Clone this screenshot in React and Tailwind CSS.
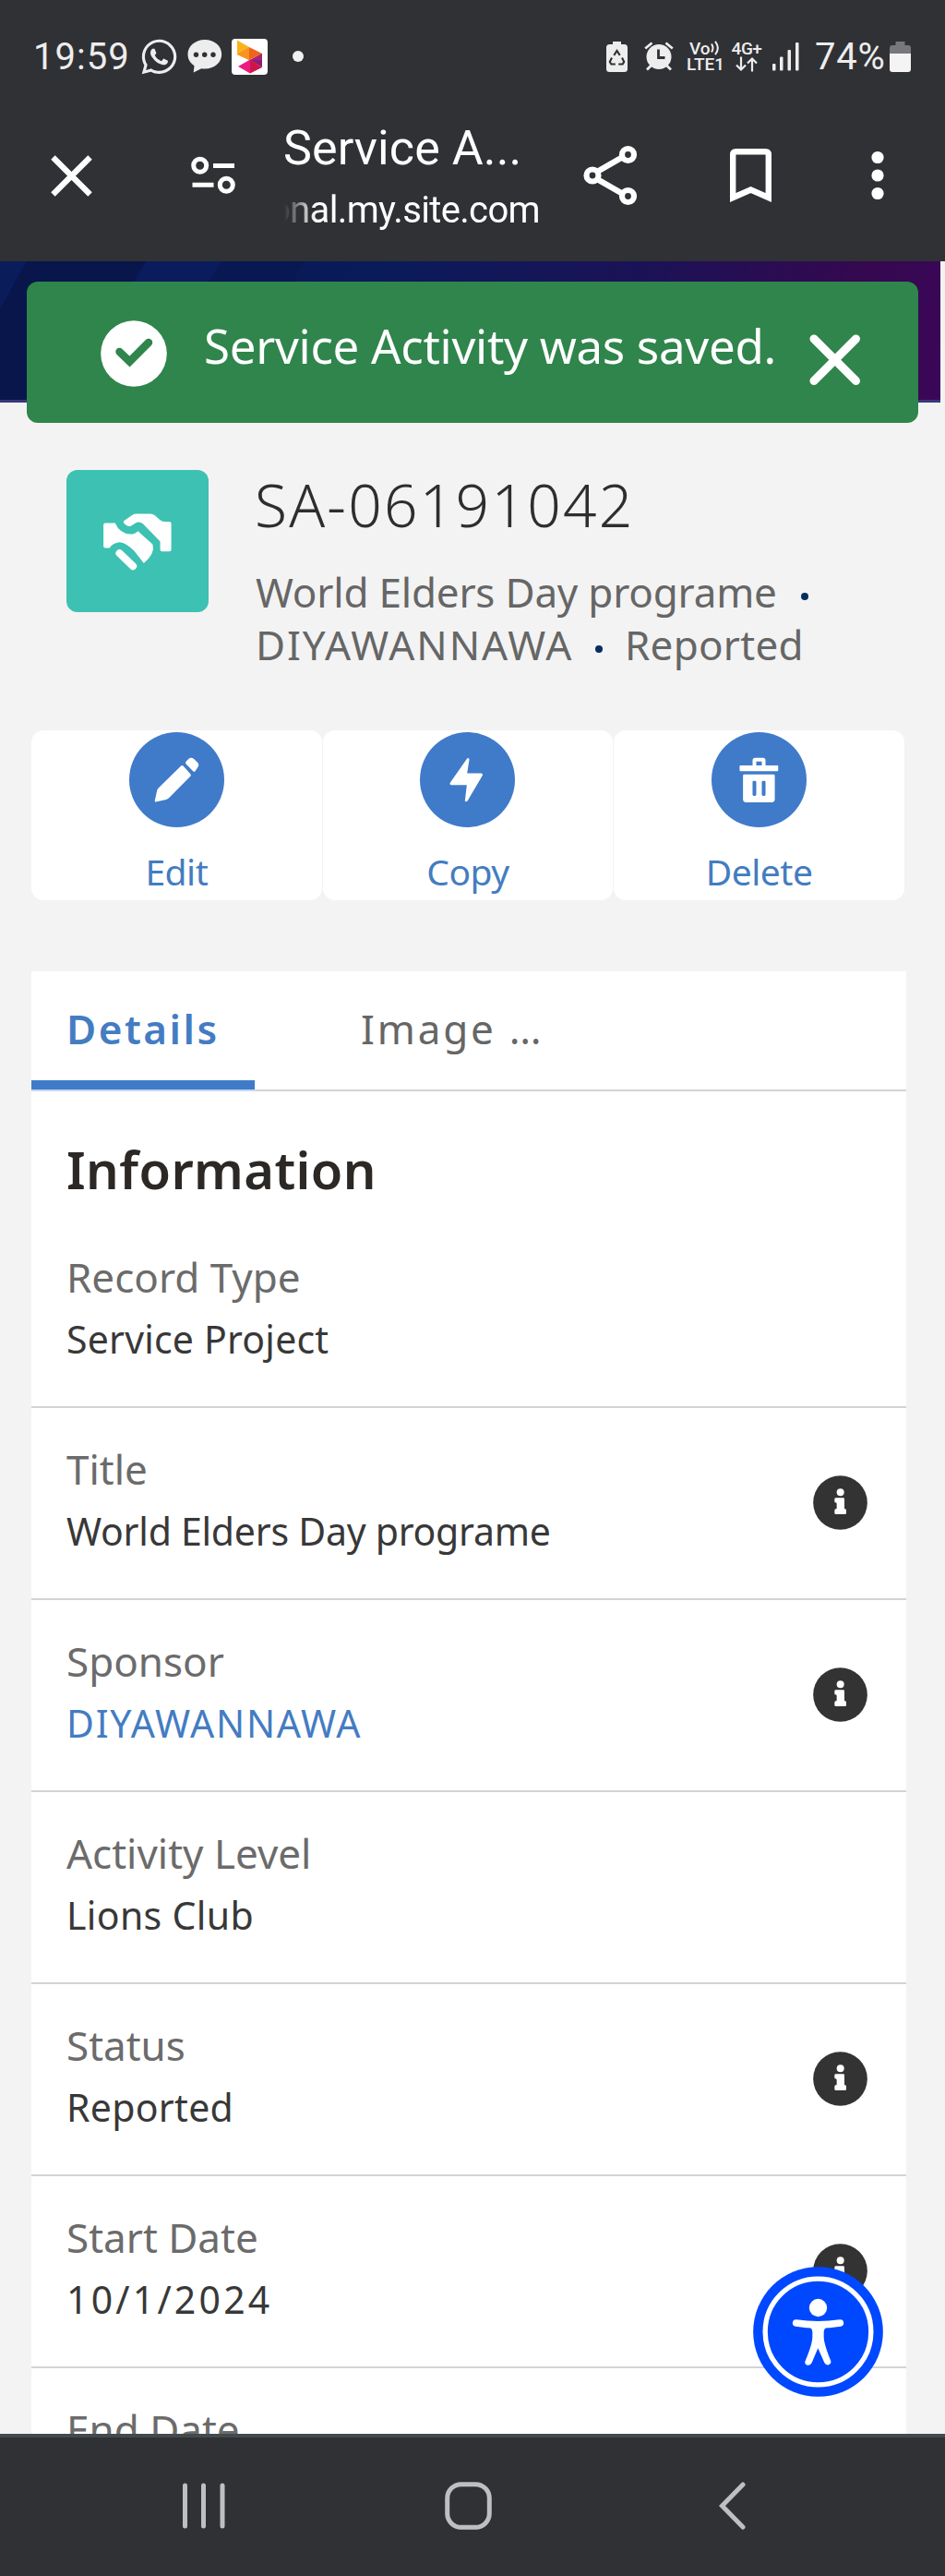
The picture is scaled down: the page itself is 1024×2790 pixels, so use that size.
import React, { useState } from "react";
import { FaWhatsapp } from "react-icons/fa";

const fields = [
  { label: "Record Type", value: "Service Project", valueClass: "tracking-[0.2px]" },
  { label: "Title", value: "World Elders Day programe", valueClass: "tracking-[-0.25px]", info: true },
  { label: "Sponsor", value: "DIYAWANNAWA", valueClass: "tracking-[1.7px]", link: true, info: true },
  { label: "Activity Level", value: "Lions Club", valueClass: "tracking-[0.35px]" },
  { label: "Status", value: "Reported", valueClass: "tracking-[0.3px]", info: true },
  { label: "Start Date", value: "10/1/2024", valueClass: "tracking-[3.2px]", info: true },
  { label: "End Date" },
];

const CrossIcon = ({ className, strokeWidth }) => (
  <svg viewBox="0 0 46 46" className={className} fill="none" stroke="currentColor" strokeWidth={strokeWidth}>
    <path d="M2.5 2.5 43.5 43.5M43.5 2.5 2.5 43.5" />
  </svg>
);

const StatusBar = () => (
  <div className="flex h-[122px] items-center pl-[36px] text-[#ededed] font-[Roboto,sans-serif]">
    <span className="w-[116px] pt-[2px] text-[40px] leading-none tracking-[1px]">19:59</span>
    <FaWhatsapp className="-ml-px h-[43px] w-[43px]" />
    <svg viewBox="0 0 38 38" className="ml-[9px] h-[38px] w-[38px]">
      <path d="M19 1C8.800 1 .5 7.800.5 16.800c0 5.600 2.800 9.600 7 12.400l-.8 7.300 8.600-4.200c1.200.2 2.500.3 3.700.3 10.200 0 18.200-6.800 18.200-15.800S29.200 1 19 1z" fill="currentColor" />
      <circle cx="9.500" cy="17.200" r="2.700" fill="#303135" />
      <circle cx="18.700" cy="17.200" r="2.700" fill="#303135" />
      <circle cx="28" cy="17.200" r="2.700" fill="#303135" />
    </svg>
    <svg viewBox="0 0 39 39" className="ml-[10px] h-[39px] w-[39px]">
      <rect width="39" height="39" rx="4" fill="#fff" />
      <path d="M6 1.500 19 9 6 17z" fill="#fbb21c" />
      <path d="M19 9 6 17l13 6z" fill="#f58a1f" />
      <path d="M19 9 33 16 19 23z" fill="#f0641e" />
      <path d="M6 17 19 9v14z" fill="#f7941d" />
      <path d="M33 16v15l-13-8z" fill="#8a1d7c" />
      <path d="M20 23 33 16v7.500z" fill="#a5246f" />
      <path d="M20 22.500 7 30l13 7.500z" fill="#ea1d84" />
      <path d="M20 22.500v15L33 31z" fill="#cf1548" />
    </svg>
    <span className="ml-[27px] h-[12px] w-[12px] rounded-full bg-[#f0f0f0]" />

    {/* battery saver */}
    <svg viewBox="0 0 23 33" className="ml-[328px] h-[33px] w-[23px]">
      <path d="M7 0h9v3h3.500A3.500 3.500 0 0 1 23 6.500v23a3.500 3.500 0 0 1-3.500 3.500h-16A3.500 3.500 0 0 1 0 29.500v-23A3.500 3.500 0 0 1 3.500 3H7z" fill="currentColor" />
      <g fill="none" stroke="#303135" strokeWidth="2.100">
        <path d="M8.300 14.800 11.500 10l3.200 4.800" />
        <path d="M6 17.500 3.800 22l1.500 2.500h4.500" />
        <path d="M17 17.500l2.200 4.500-1.500 2.500h-4.500" />
      </g>
    </svg>
    {/* alarm */}
    <svg viewBox="0 0 32 32" className="ml-[18px] h-[32px] w-[32px]">
      <circle cx="16" cy="16.500" r="13.500" fill="currentColor" />
      <g fill="none" stroke="currentColor" strokeWidth="2.800">
        <path d="M1.200 7.500 8.500 1.500M30.800 7.500 23.500 1.500M3 30.500l5-5M29 30.500l-5-5" />
      </g>
      <path d="M15.500 8.500v9h7" fill="none" stroke="#303135" strokeWidth="2.800" />
    </svg>
    <div className="ml-[14px] flex w-[42px] flex-col text-[19px] font-medium leading-[17.500px]">
      <span className="flex items-center pl-[3px]">
        Vo
        <svg viewBox="0 0 10 16" className="h-[16px] w-[10px]" fill="none" stroke="currentColor" strokeWidth="2">
          <path d="M1 3.500c2 3 2 6 0 9M5 .8c3.500 4.500 3.500 10 0 14.400" />
        </svg>
      </span>
      <span className="text-[19px]">LTE1</span>
    </div>
    <div className="ml-[5px] flex w-[36px] flex-col items-center text-[19px] font-medium leading-[17.500px]">
      <span className="tracking-[-0.5px]">4G+</span>
      <svg viewBox="0 0 24 16" className="h-[17px] w-[24px]" fill="none" stroke="currentColor" strokeWidth="2.200">
        <path d="M6 0v14M1 9l5 5 5-5M18 16V2M13 7l5-5 5 5" />
      </svg>
    </div>
    <svg viewBox="0 0 29 31" className="ml-[10px] h-[31px] w-[29px]" fill="currentColor">
      <rect x="0" y="23" width="3.500" height="7.500" rx="1" />
      <rect x="8" y="15.500" width="3.500" height="15" rx="1" />
      <rect x="16.500" y="8" width="3.500" height="22.500" rx="1" />
      <rect x="25" y="0" width="3.500" height="30.500" rx="1" />
    </svg>
    <span className="ml-[17px] w-[81px] pt-[2px] text-[40px] leading-none tracking-[0.8px]">74%</span>
    <svg viewBox="0 0 23 33" className="h-[33px] w-[23px]">
      <path d="M6.500 0h10v4H20a3 3 0 0 1 3 3v7H0V7a3 3 0 0 1 3-3h3.500z" fill="#77787b" />
      <path d="M0 13h23v17a3 3 0 0 1-3 3H3a3 3 0 0 1-3-3z" fill="#f4f4f4" />
    </svg>
  </div>
);

const BrowserBar = () => (
  <div className="flex h-[161px] pb-[25px] text-white">
    <div className="flex h-[136px] items-center pl-[55px]">
      <CrossIcon className="h-[45px] w-[45px]" strokeWidth={6.4} />
      <svg viewBox="0 0 48 42" className="ml-[107px] h-[42px] w-[48px]" fill="none" stroke="currentColor" strokeWidth="5">
        <circle cx="9.700" cy="10.200" r="7" />
        <path d="M24 10.500h23M1.500 31.200h23" />
        <circle cx="38.300" cy="31.200" r="7" />
      </svg>
      <div className="ml-[53px] mt-1 w-[277px] font-[Roboto,sans-serif]">
        <div className="-ml-px h-[64px] whitespace-nowrap text-[52px] leading-[64px] tracking-[0.1px]">Service A...</div>
        <div className="mt-[7px] flex h-[56px] justify-end overflow-hidden whitespace-nowrap text-[40px] leading-[56px] tracking-[-0.65px] [mask-image:linear-gradient(to_right,transparent,black_34px)]">
          <span>onal.my.site.com</span>
        </div>
      </div>
      <svg viewBox="0 0 60 66" className="ml-[46px] h-[66px] w-[60px]" fill="none" stroke="currentColor" strokeWidth="6.200">
        <path d="M16 29 43 13.500M16 37l27 15.500" />
        <circle cx="11" cy="33" r="6.500" />
        <circle cx="49.500" cy="10.500" r="6.500" />
        <circle cx="49.500" cy="55.500" r="6.500" />
      </svg>
      <svg viewBox="0 0 45 58" className="ml-[100px] h-[58px] w-[45px]" fill="none" stroke="currentColor" strokeWidth="6.400">
        <path d="M3.200 53V6.500Q3.200 3.200 6.500 3.200H38.500Q41.800 3.200 41.800 6.500V53L22.500 44.500z" />
      </svg>
      <svg viewBox="0 0 14 54" className="ml-[108px] h-[54px] w-[14px]" fill="currentColor">
        <circle cx="7" cy="7.500" r="6.600" />
        <circle cx="7" cy="27" r="6.600" />
        <circle cx="7" cy="46.500" r="6.600" />
      </svg>
    </div>
  </div>
);

const Toast = ({ onClose }) => (
  <div className="absolute left-[29px] top-[21.500px] flex h-[153.500px] w-[966px] items-start rounded-[12px] bg-[#2f854b] pl-[80px] text-white">
    <svg viewBox="0 0 72 72" className="mt-[42px] h-[72px] w-[72px]">
      <circle cx="36" cy="36" r="35.800" fill="#fff" />
      <path d="M20.500 34 31.500 44.500 52 24" fill="none" stroke="#2f854b" strokeWidth="8.500" strokeLinejoin="miter" strokeLinecap="round" />
    </svg>
    <span className="ml-[40px] mt-[34px] w-[624px] whitespace-nowrap text-[51px] leading-[70px] tracking-[-0.3px]">
      Service Activity was saved.
    </span>
    <button onClick={onClose} className="ml-[32px] mt-[57px]">
      <svg viewBox="0 0 56 56" className="h-[56px] w-[56px]" fill="none" stroke="#fff" strokeWidth="9" strokeLinecap="round">
        <path d="M5 5 50.500 50.500M50.500 5 5 50.500" />
      </svg>
    </button>
  </div>
);

const Banner = () => (
  <div className="h-[153px] w-[1019px] border-b-[3px] border-[#39377c] bg-[linear-gradient(100deg,#091850_0%,#0a1b5a_40%,#1c1256_68%,#35084f_90%,#3b0759_100%)]">
    <svg viewBox="0 0 500 150" className="h-[150px] w-[500px]">
      <path d="M0 0H29L0 52z" fill="#0a1c5a" />
      <path d="M29 0H158L72 150H0V52z" fill="#08164c" />
      <path d="M158 0H240L150 150H72z" fill="#0a1c5e" />
      <path d="M240 0H330L240 150H150z" fill="#091853" />
    </svg>
  </div>
);

const RecordHeader = () => (
  <div className="flex h-[355px] pl-[72px]">
    <svg viewBox="216 688 461 461" className="mt-[73px] h-[154px] w-[154px] rounded-[12px] bg-[#3dc1b3]" fill="#fff">
      <path d="M336 866q0-6 6-6h32q14 34 50 36 14 0 24-10l48 44q8 30-29 60L436 951Q410 924 388 922q-22 2-32 19h-14q-6 0-6-6z" />
      <path d="M404 852 430 834q6-4 12-4h46q8 0 14 5l16 14q8 7 16 7h16q6 0 6 6v84q0 6-6 6h-24q-6 0-6-6v-26L464 862q-12-9-24-2l-14 9q-8 4-16-2l-6-5q-6-6 0-10z" />
      <path d="M388 958 432 1000" stroke="#fff" strokeWidth="24" strokeLinecap="round" />
    </svg>
    <div className="ml-[50px] mt-[71px]">
      <h1 className="h-[80px] whitespace-nowrap text-[64px] font-[270] leading-[80px] tracking-[2.25px] text-[#2e2e2e]">SA-06191042</h1>
      <div className="mt-[26px] text-[44px] leading-[56px] text-[#666]">
        <div className="flex h-[56px] items-center">
          <span className="w-[592px] whitespace-nowrap pl-px tracking-[-0.2px]">World Elders Day programe</span>
          <span className="mt-[10px] h-[8px] w-[8px] rounded-full bg-[#032d60]" />
        </div>
        <div className="flex h-[57px] items-center">
          <span className="w-[369px] whitespace-nowrap pl-px tracking-[1.9px]">DIYAWANNAWA</span>
          <span className="mt-[11px] h-[8px] w-[8px] rounded-full bg-[#032d60]" />
          <span className="ml-[24px] tracking-[0.25px]">Reported</span>
        </div>
      </div>
    </div>
  </div>
);

const ActionButton = ({ label, children }) => (
  <button className="flex h-[184px] flex-col items-center rounded-[13px] bg-white pt-[2px]">
    <svg viewBox="0 0 308 308" className="h-[103px] w-[103px] rounded-full bg-[#407bca]" fill="#fff">
      {children}
    </svg>
    <span className="mt-[23px] text-[39px] leading-[50px] tracking-[-0.5px] text-[#447cc0]">{label}</span>
  </button>
);

const Actions = () => (
  <div className="ml-[34px] grid w-[946px] grid-cols-3 gap-[1px]">
    <ActionButton label="Edit">
      <path d="M168 109q4-3 7 0l24 27q2 3 0 6l-68 69q-5 5-11 7l-34 8q-4 0-3-4l7-32q1-4 4-8z" />
      <path d="M184 95l9-9q8-6 16 0l13 13q6 8 0 15l-8 12q-4 3-7 0L184 103q-3-4 0-8z" />
    </ActionButton>
    <ActionButton label="Copy">
      <path d="M153 85q6-3 7 4l-7 44h46q6 2 4 7L154 223q-6 5-8-1l6-51H101q-6-2-3-7z" />
    </ActionButton>
    <ActionButton label="Delete">
      <path d="M133 110V92q0-9 9-9h24q9 0 9 9v18h-12V95h-18v15z" />
      <rect x="91" y="108" width="125" height="18" rx="3" />
      <path fillRule="evenodd" d="M106 137h95q4 0 4 4v76q0 10-10 10h-83q-10 0-10-10v-76q0-4 4-4zM137 158q-4 0-4 4v40q0 4 4 4h4q4 0 4-4v-40q0-4-4-4zM167 158q-4 0-4 4v40q0 4 4 4h4q4 0 4-4v-40q0-4-4-4z" />
    </ActionButton>
  </div>
);

const Tabs = ({ active, onChange }) => (
  <div className="flex h-[130px] border-b-2 border-[#d4d4d4] text-[44px] leading-[60px]">
    <button
      onClick={() => onChange("details")}
      className={`-mb-[2px] flex w-[242px] border-b-2 pl-[38px] pt-[32px] font-semibold tracking-[2.5px] ${
        active === "details" ? "border-[#c4d8f0] text-[#447cc2] shadow-[inset_0_-10px_0_#407bca]" : "border-transparent text-[#666]"
      }`}
    >
      Details
    </button>
    <button onClick={() => onChange("image")} className="ml-[115px] flex pt-[32px] tracking-[2.8px] text-[#666]">
      Image …
    </button>
  </div>
);

const InfoIcon = () => (
  <svg viewBox="0 0 177 177" className="h-[59px] w-[59px]">
    <circle cx="88.500" cy="88.500" r="88" fill="#333" />
    <circle cx="89" cy="55" r="12" fill="#fff" />
    <path d="M74 73h24q4 0 4 4v31q6 1 6 5v9q0 4-4 4H74q-4 0-4-4v-9q0-4 7-5V92q0-4-7-5V77q0-4 4-4z" fill="#fff" />
  </svg>
);

const Field = ({ label, value, valueClass, link, info }) => (
  <div className="flex h-[208px] shrink-0 justify-between border-b-2 border-[#d4d4d4] pl-[38px] pr-[42px]">
    <div className="pt-[34px]">
      <div className="text-[44px] leading-[65px] text-[#6b6b6b]">{label}</div>
      {value && (
        <div className={`text-[41px] leading-[69px] ${valueClass} ${link ? "text-[#447cc2]" : "text-[#383838]"}`}>{value}</div>
      )}
    </div>
    {info && <div className="flex items-center pb-px"><InfoIcon /></div>}
  </div>
);

const AccessibilityButton = () => (
  <button className="absolute left-[816px] top-[2455px] h-[141px] w-[141px]">
    <svg viewBox="0 0 423 423" className="h-[141px] w-[141px]">
      <circle cx="211.500" cy="211.500" r="211" fill="#0048ff" />
      <circle cx="211.500" cy="211.500" r="172" fill="none" stroke="#fff" strokeWidth="16" />
      <circle cx="211.500" cy="133.500" r="29" fill="#fff" />
      <path d="M140 183Q211 194 283 183M211 190V250" fill="none" stroke="#fff" strokeWidth="23" strokeLinecap="round" />
      <path d="M180 194Q193 200 193 212V228Q193 252 169 308Q167 318 177 320 187 321 191 312L211 265 232 312Q236 321 246 319 255 316 253 307 230 250 230 228V212Q230 200 243 194z" fill="#fff" />
    </svg>
  </button>
);

const SystemNav = () => (
  <div className="flex h-[154px] items-center border-t-4 border-[#434a4e] bg-[#303135] pb-[3px] pl-[197px] text-[#bfbfc1]">
    <svg viewBox="0 0 47 50" className="h-[50px] w-[47px]" fill="none" stroke="currentColor" strokeWidth="5" strokeLinecap="round">
      <path d="M3.500 3V47M23.500 3V47M44 3V47" />
    </svg>
    <svg viewBox="0 0 51 52" className="ml-[238px] h-[52px] w-[51px]" fill="none" stroke="currentColor" strokeWidth="5">
      <rect x="2.700" y="2.700" width="45.600" height="46.600" rx="15" />
    </svg>
    <svg viewBox="0 0 30 52" className="ml-[246px] h-[52px] w-[30px]" fill="none" stroke="currentColor" strokeWidth="5" strokeLinecap="round">
      <path d="M26 3 3.500 26 26 49" />
    </svg>
  </div>
);

export default function App() {
  const [showToast, setShowToast] = useState(true);
  const [tab, setTab] = useState("details");

  return (
    <div className="relative h-[2790px] w-[1024px] overflow-hidden bg-[#f3f3f3] font-['Noto_Sans',sans-serif]">
      <header className="bg-[#303135]">
        <StatusBar />
        <BrowserBar />
      </header>
      <main className="relative h-[2353px] overflow-hidden">
        <Banner />
        {showToast && <Toast onClose={() => setShowToast(false)} />}
        <RecordHeader />
        <Actions />
        <section className="ml-[34px] mt-[77px] w-[947.500px] bg-white">
          <Tabs active={tab} onChange={setTab} />
          <h2 className="h-[134.500px] pl-[38px] pt-[46px] text-[56px] font-semibold leading-[76px] tracking-[0.4px] text-[#2b2826]">
            Information
          </h2>
          {fields.map((field) => (
            <Field key={field.label} {...field} />
          ))}
        </section>
      </main>
      <AccessibilityButton />
      <SystemNav />
    </div>
  );
}
